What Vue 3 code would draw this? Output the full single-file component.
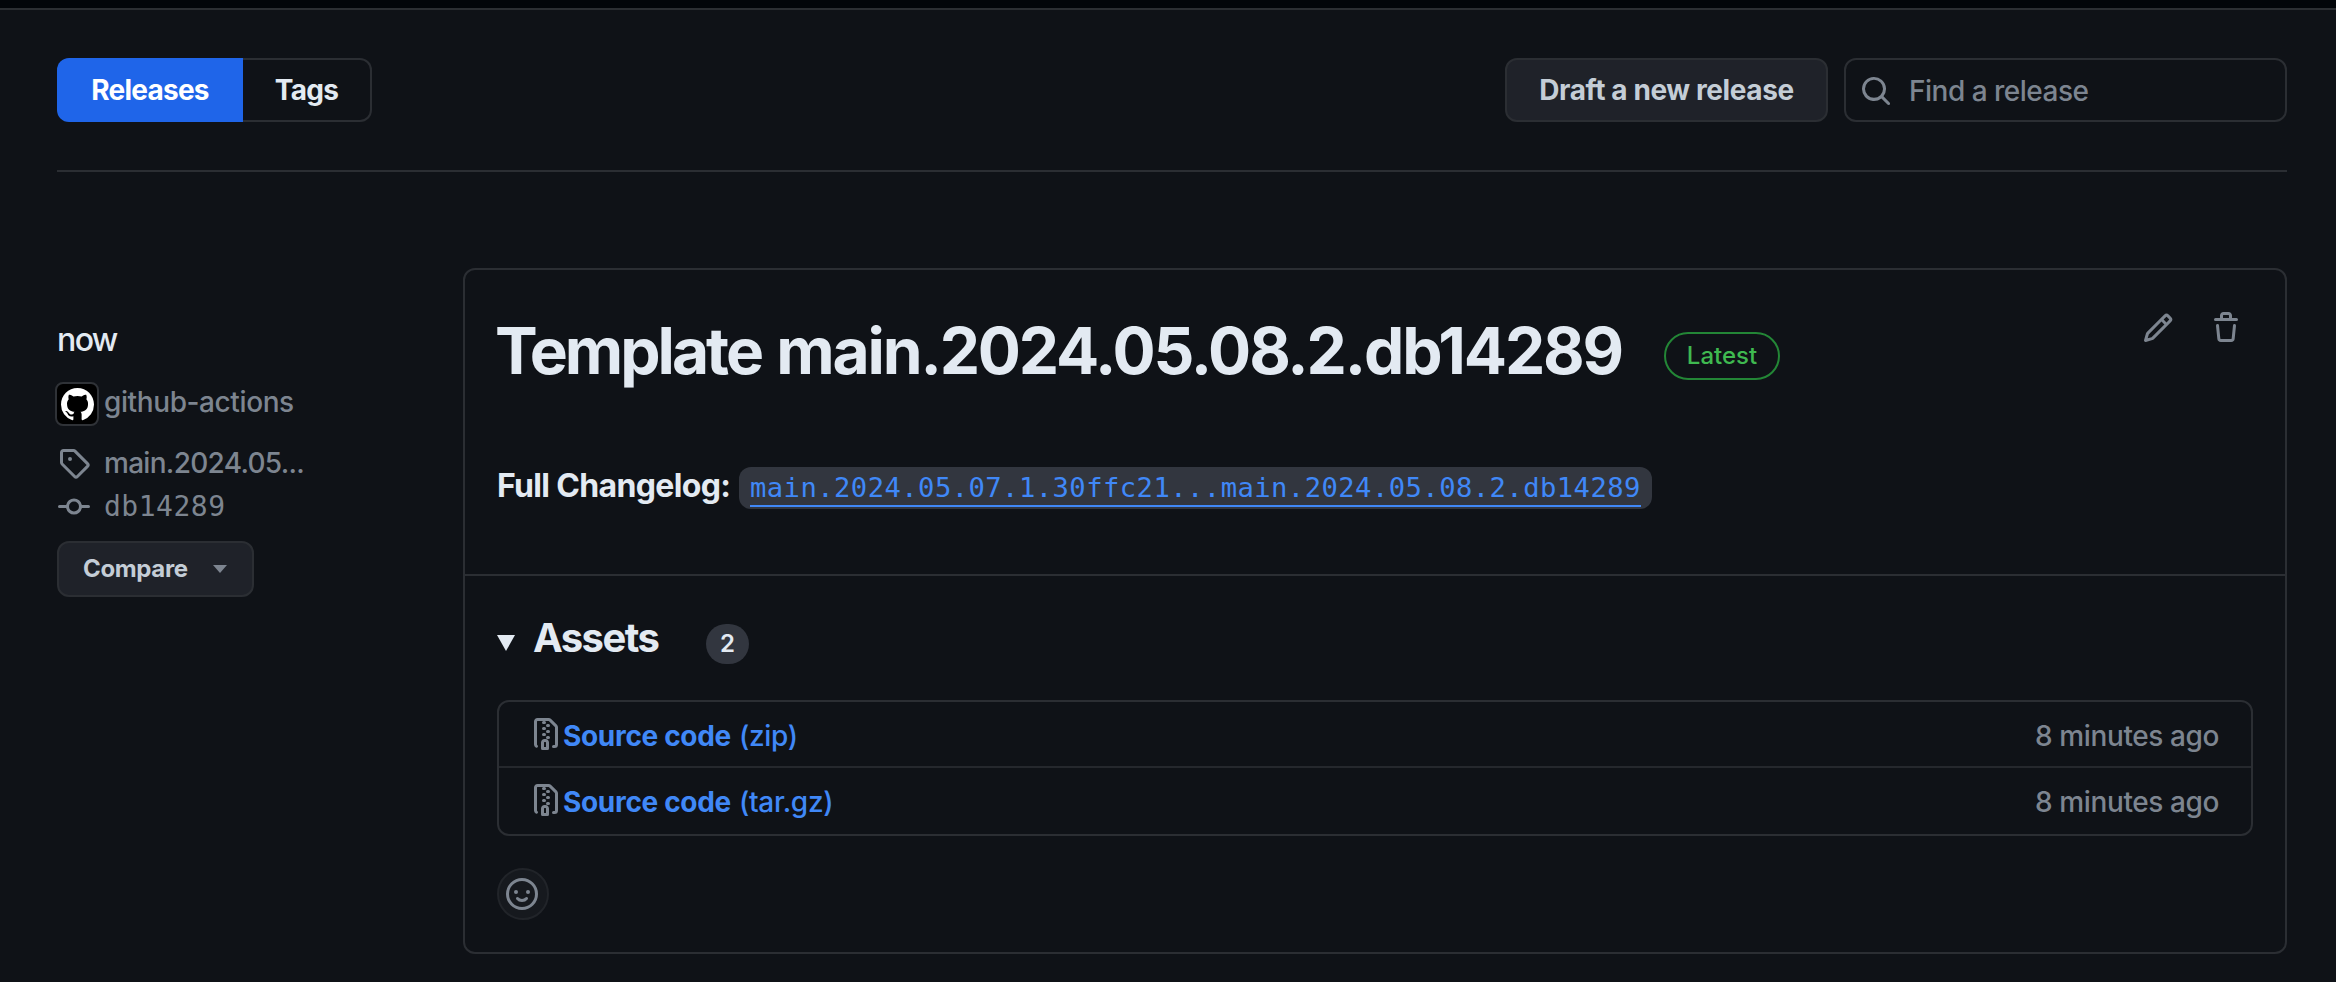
<script setup>
const icons = {
  search: 'M10.68 11.74a6 6 0 0 1-7.922-8.982 6 6 0 0 1 8.982 7.922l3.04 3.04a.749.749 0 0 1-.326 1.275.749.749 0 0 1-.734-.215ZM11.5 7a4.499 4.499 0 1 0-8.997 0A4.499 4.499 0 0 0 11.5 7Z',
  tag: 'M1 7.775V2.75C1 1.784 1.784 1 2.75 1h5.025c.464 0 .91.184 1.238.513l6.25 6.25a1.75 1.75 0 0 1 0 2.474l-5.026 5.026a1.75 1.75 0 0 1-2.474 0l-6.25-6.25A1.752 1.752 0 0 1 1 7.775Zm1.5 0c0 .066.026.13.073.177l6.25 6.25a.25.25 0 0 0 .354 0l5.025-5.025a.25.25 0 0 0 0-.354l-6.25-6.25a.25.25 0 0 0-.177-.073H2.75a.25.25 0 0 0-.25.25ZM6 5a1 1 0 1 1 0 2 1 1 0 0 1 0-2Z',
  commit: 'M11.93 8.5a4.002 4.002 0 0 1-7.86 0H.75a.75.75 0 0 1 0-1.5h3.32a4.002 4.002 0 0 1 7.86 0h3.32a.75.75 0 0 1 0 1.5Zm-1.43-.75a2.5 2.5 0 1 0-5 0 2.5 2.5 0 0 0 5 0Z',
  pencil: 'M11.013 1.427a1.75 1.75 0 0 1 2.474 0l1.086 1.086a1.75 1.75 0 0 1 0 2.474l-8.61 8.61c-.21.21-.47.364-.756.445l-3.251.93a.75.75 0 0 1-.927-.928l.929-3.25c.081-.286.235-.547.445-.758l8.61-8.61Zm.176 4.823L9.75 4.81l-6.286 6.287a.253.253 0 0 0-.064.108l-.558 1.953 1.953-.558a.253.253 0 0 0 .108-.064Zm1.238-3.763a.25.25 0 0 0-.354 0L10.811 3.75l1.439 1.44 1.263-1.263a.25.25 0 0 0 0-.354Z',
  trash: 'M11 1.75V3h2.25a.75.75 0 0 1 0 1.5H2.75a.75.75 0 0 1 0-1.5H5V1.75C5 .784 5.784 0 6.75 0h2.5C10.216 0 11 .784 11 1.75ZM4.496 6.675l.66 6.6a.25.25 0 0 0 .249.225h5.19a.25.25 0 0 0 .249-.225l.66-6.6a.75.75 0 0 1 1.492.149l-.66 6.6A1.748 1.748 0 0 1 10.595 15h-5.19a1.75 1.75 0 0 1-1.741-1.575l-.66-6.6a.75.75 0 1 1 1.492-.15ZM6.5 1.75V3h3V1.75a.25.25 0 0 0-.25-.25h-2.5a.25.25 0 0 0-.25.25Z',
  zip: 'M3.5 1.75v11.5c0 .09.048.173.126.217a.75.75 0 0 1-.752 1.298A1.748 1.748 0 0 1 2 13.25V1.75C2 .784 2.784 0 3.75 0h5.586c.464 0 .909.185 1.237.513l2.914 2.914c.329.328.513.773.513 1.237v8.586A1.75 1.75 0 0 1 12.25 15h-.5a.75.75 0 0 1 0-1.5h.5a.25.25 0 0 0 .25-.25V4.664a.25.25 0 0 0-.073-.177L9.513 1.573a.25.25 0 0 0-.177-.073H7.25a.75.75 0 0 1 0 1.5h-.5a.75.75 0 0 1 0-1.5h-3a.25.25 0 0 0-.25.25Zm3.75 8.75h.5c.966 0 1.75.784 1.75 1.75v3a.75.75 0 0 1-.75.75h-2.5a.75.75 0 0 1-.75-.75v-3c0-.966.784-1.75 1.75-1.75ZM6 5.25a.75.75 0 0 1 .75-.75h.5a.75.75 0 0 1 0 1.5h-.5A.75.75 0 0 1 6 5.25Zm.75 2.25h.5a.75.75 0 0 1 0 1.5h-.5a.75.75 0 0 1 0-1.5ZM8 6.75A.75.75 0 0 1 8.75 6h.5a.75.75 0 0 1 0 1.5h-.5A.75.75 0 0 1 8 6.75ZM8.75 3h.5a.75.75 0 0 1 0 1.5h-.5a.75.75 0 0 1 0-1.5ZM8 9.75A.75.75 0 0 1 8.75 9h.5a.75.75 0 0 1 0 1.5h-.5A.75.75 0 0 1 8 9.75Zm-1 2.5v2.25h1v-2.25a.25.25 0 0 0-.25-.25h-.5a.25.25 0 0 0-.25.25Z',
  mark: 'M8 0c4.42 0 8 3.58 8 8a8.013 8.013 0 0 1-5.45 7.59c-.4.08-.55-.17-.55-.38 0-.27.01-1.13.01-2.2 0-.75-.25-1.23-.54-1.48 1.78-.2 3.65-.88 3.65-3.95 0-.88-.31-1.59-.82-2.15.08-.2.36-1.02-.08-2.12 0 0-.67-.22-2.2.82-.64-.18-1.32-.27-2-.27-.68 0-1.36.09-2 .27-1.53-1.03-2.2-.82-2.2-.82-.44 1.1-.16 1.92-.08 2.12-.51.56-.82 1.28-.82 2.15 0 3.06 1.86 3.75 3.64 3.95-.23.2-.44.55-.51 1.07-.46.21-1.61.55-2.33-.66-.15-.24-.6-.83-1.23-.82-.67.01-.27.38.01.53.34.19.73.9.82 1.13.16.45.68 1.31 2.69.94 0 .67.01 1.3.01 1.49 0 .21-.15.45-.55.38A7.995 7.995 0 0 1 0 8c0-4.42 3.58-8 8-8Z',
}

const assets = [
  { name: 'Source code', format: '(zip)', time: '8 minutes ago' },
  { name: 'Source code', format: '(tar.gz)', time: '8 minutes ago' },
]
</script>

<template>
  <div class="page">
    <div class="topbar"></div>
    <main class="main">
      <header class="header">
        <nav class="tabs">
          <a class="tab active">Releases</a>
          <a class="tab">Tags</a>
        </nav>
        <div class="tools">
          <button class="draft">Draft a new release</button>
          <label class="search">
            <svg class="icon" viewBox="0 0 16 16"><path :d="icons.search" /></svg>
            <span>Find a release</span>
          </label>
        </div>
      </header>

      <div class="release">
        <aside class="meta">
          <div class="when">now</div>
          <div class="author">
            <span class="avatar"><svg viewBox="0 0 16 16"><path :d="icons.mark" /></svg></span>
            <span class="author-name">github-actions</span>
          </div>
          <div class="ref tag-ref">
            <svg class="icon" viewBox="0 0 16 16"><path :d="icons.tag" /></svg>
            <span class="tag-name">main.2024.05...</span>
          </div>
          <div class="ref commit-ref">
            <svg class="icon" viewBox="0 0 16 16"><path :d="icons.commit" /></svg>
            <code>db14289</code>
          </div>
          <button class="compare"><span>Compare</span><i class="caret"></i></button>
        </aside>

        <section class="card">
          <div class="card-body">
            <div class="title-row">
              <h1><span class="title-word">Template </span>main.2024.05.08.2.db14289</h1>
              <span class="latest">Latest</span>
              <div class="actions">
                <svg class="icon" viewBox="0 0 16 16"><path :d="icons.pencil" /></svg>
                <svg class="icon" viewBox="0 0 16 16"><path :d="icons.trash" /></svg>
              </div>
            </div>
            <p class="changelog">
              <strong>Full Changelog:</strong>
              <code class="range"><a>main.2024.05.07.1.30ffc21...main.2024.05.08.2.db14289</a></code>
            </p>
          </div>

          <div class="card-footer">
            <div class="assets-head">
              <svg class="triangle" viewBox="0 0 18 16"><path d="M0 0h18L9 16Z" /></svg>
              <h2>Assets</h2>
              <span class="counter">2</span>
            </div>
            <ul class="assets">
              <li v-for="asset in assets" :key="asset.format">
                <svg class="icon" viewBox="0 0 16 16"><path :d="icons.zip" /></svg>
                <a class="asset-link"><b>{{ asset.name }}</b><span>{{ asset.format }}</span></a>
                <span class="time">{{ asset.time }}</span>
              </li>
            </ul>
            <button class="react">
              <svg class="icon" viewBox="0 0 16 16">
                <circle class="line" cx="8" cy="8" r="7.25" />
                <circle cx="5" cy="7" r="1" />
                <circle cx="11" cy="7" r="1" />
                <path class="line" d="M5.75 10.25Q6.6 11.25 8 11.25T10.25 10.25" />
              </svg>
            </button>
          </div>
        </section>
      </div>
    </main>
  </div>
</template>

<style>
body {
  background: #0f1217;
}
</style>

<style scoped>
.page {
  height: 982px;
  overflow: hidden;
  background: #0f1217;
  color: #e3eaf2;
  font-family: Inter, "Liberation Sans", sans-serif;
  font-size: 28px;
  font-weight: 450;
  line-height: 40px;
}
.page * {
  box-sizing: border-box;
}
button {
  padding: 0;
  font: inherit;
  color: inherit;
}
.topbar {
  height: 10px;
  background: #02050a;
  border-bottom: 2px solid #2b2e33;
}
.main {
  padding: 48px 49px 0 57px;
}
.icon {
  display: block;
  flex: none;
  width: 32px;
  height: 32px;
  fill: #7d8590;
}
.header {
  display: flex;
  justify-content: space-between;
  height: 114px;
  border-bottom: 2px solid #2b2e33;
}
.tabs,
.tools {
  display: flex;
  height: 64px;
}
.tools {
  gap: 16px;
}
.tab {
  display: flex;
  align-items: center;
  justify-content: center;
  width: 129px;
  border: 2px solid #2b2e33;
  border-left: 0;
  border-radius: 0 12px 12px 0;
  font-weight: 650;
  letter-spacing: -0.75px;
}
.tab.active {
  width: 186px;
  border: 0;
  border-radius: 12px 0 0 12px;
  background: #1f65e9;
  color: #fff;
}
.draft {
  width: 323px;
  border: 2px solid #2b2e33;
  border-radius: 12px;
  background: #1f2229;
  color: #c4cdd6;
  font-weight: 650;
  letter-spacing: -0.4px;
}
.search {
  display: flex;
  align-items: center;
  gap: 17px;
  width: 443px;
  padding: 2px 0 0 14px;
  border: 2px solid #2b2e33;
  border-radius: 12px;
  color: #7d8590;
  letter-spacing: -0.5px;
}
.release {
  display: grid;
  grid-template-columns: 406px 1fr;
  padding-top: 96px;
}
.meta {
  padding-top: 48px;
  color: #7d8590;
}
.when {
  color: #e3eaf2;
  font-size: 32px;
  line-height: 48px;
  letter-spacing: -1.6px;
}
.author {
  display: flex;
  align-items: flex-start;
  gap: 5px;
  height: 44px;
  margin: 18px 0 0 -2px;
  letter-spacing: -0.4px;
}
.avatar {
  display: grid;
  place-items: center;
  width: 44px;
  height: 44px;
  border: 2px solid #2f3237;
  border-radius: 8px;
  background: #000;
}
.avatar svg {
  width: 33px;
  height: 33px;
  fill: #fff;
}
.ref {
  display: flex;
  align-items: center;
  gap: 14px;
  height: 42px;
  padding-left: 1px;
}
.tag-ref {
  margin-top: 16px;
  letter-spacing: -0.7px;
}
.commit-ref {
  margin-top: 2px;
}
code {
  font-family: "DejaVu Sans Mono", "Liberation Mono", monospace;
}
.ref code {
  font-size: 28px;
  letter-spacing: 0.5px;
}
.compare {
  display: flex;
  align-items: center;
  gap: 25px;
  width: 197px;
  height: 56px;
  margin-top: 13px;
  padding-left: 24px;
  border: 2px solid #2b2e33;
  border-radius: 12px;
  background: #1f2229;
  color: #c4cdd6;
  font-size: 24px;
  font-weight: 650;
  letter-spacing: -0.35px;
}
.caret {
  border: 7px solid transparent;
  border-top: 8px solid #7d8590;
  border-bottom: 0;
}
.card {
  height: 686px;
  border: 2px solid #2b2e33;
  border-radius: 12px;
}
.card-body {
  height: 306px;
  padding: 41px 32px 0;
  border-bottom: 2px solid #2b2e33;
}
.title-row {
  display: flex;
  align-items: flex-start;
}
h1 {
  width: 1169px;
  margin: 0 0 0 -2px;
  font-size: 64px;
  font-weight: 650;
  line-height: 80px;
  letter-spacing: -2.13px;
  white-space: nowrap;
}
.title-word {
  margin-right: 3px;
  letter-spacing: -3px;
}
.latest {
  width: 116px;
  height: 48px;
  margin-top: 21px;
  border: 2px solid #238636;
  border-radius: 24px;
  color: #3fb950;
  font-size: 24px;
  font-weight: 550;
  line-height: 44px;
  text-align: center;
}
.actions {
  display: flex;
  gap: 36px;
  margin: 1px 11px 0 auto;
}
.changelog {
  display: flex;
  align-items: flex-start;
  margin: 71px 0 0;
  font-size: 32px;
  line-height: 48px;
}
.changelog strong {
  width: 242px;
  font-weight: 650;
  letter-spacing: -0.65px;
  white-space: nowrap;
}
.range {
  height: 42px;
  margin-top: 5px;
  padding: 0 11px;
  border-radius: 12px;
  background: #32363f;
  color: #4088f7;
  font-size: 27.2px;
  line-height: 42px;
}
.range a {
  display: block;
  height: 40px;
  border-bottom: 2px solid #4088f7;
  letter-spacing: 0.44px;
}
.card-footer {
  padding: 38px 32px 0;
}
.assets-head {
  display: flex;
  align-items: flex-start;
}
.triangle {
  width: 18px;
  height: 16px;
  margin: 21px 18px 0 0;
  fill: #e3eaf2;
}
h2 {
  width: 173px;
  margin: 0;
  font-size: 40px;
  font-weight: 650;
  line-height: 48px;
  letter-spacing: -1.6px;
}
.counter {
  width: 43px;
  height: 40px;
  margin-top: 10px;
  border-radius: 20px;
  background: #32363f;
  font-size: 24px;
  font-weight: 600;
  text-align: center;
}
.assets {
  margin: 36px 0 0;
  padding: 0;
  border: 2px solid #2b2e33;
  border-radius: 12px;
  list-style: none;
}
.assets li {
  display: flex;
  align-items: flex-start;
  height: 68px;
  padding: 14px 32px 0 31px;
}
.assets li + li {
  border-top: 2px solid #25282d;
}
.assets li:first-child {
  height: 64px;
}
.assets .icon {
  margin-top: 2px;
}
.asset-link {
  display: flex;
  gap: 8px;
  color: #4088f7;
  letter-spacing: -0.3px;
}
.asset-link b {
  margin-left: 1px;
  font-weight: 650;
  letter-spacing: -0.32px;
}
.time {
  margin-left: auto;
  color: #7d8590;
  letter-spacing: -0.4px;
}
.react {
  display: grid;
  place-items: center;
  width: 52px;
  height: 52px;
  margin-top: 32px;
  padding-right: 2px;
  border: 2px solid #212429;
  border-radius: 50%;
  background: #16191e;
}
.line {
  fill: none;
  stroke: #7d8590;
  stroke-width: 1.5;
  stroke-linecap: round;
}
</style>
